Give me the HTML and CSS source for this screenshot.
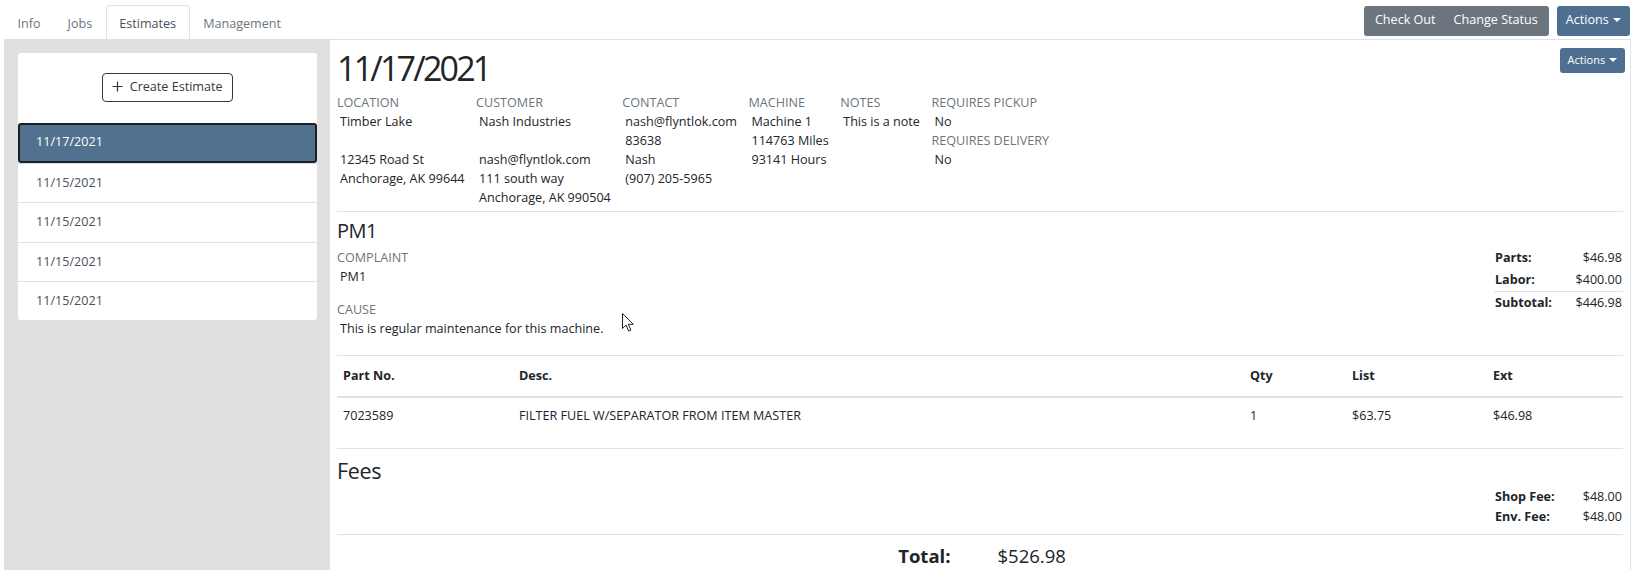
FILE: index.html
```html
<!DOCTYPE html>
<html lang="en">
<head>
    <meta charset="UTF-8">
    <meta name="viewport" content="width=device-width, initial-scale=1.0">
    <title>Estimates</title>
    <link rel="stylesheet" href="styles.css">
</head>
<body>

<!-- Top bar: tabs + page actions -->
<div class="topbar">
    <ul class="tabs">
        <li class="tab">Info</li>
        <li class="tab">Jobs</li>
        <li class="tab active">Estimates</li>
        <li class="tab">Management</li>
    </ul>
    <div class="top-actions">
        <div class="btn-group">
            <button class="btn btn-gray">Check Out</button>
            <button class="btn btn-gray">Change Status</button>
        </div>
        <button class="btn btn-blue">Actions <span class="caret"></span></button>
    </div>
</div>

<div class="workspace">

    <!-- Estimate list -->
    <aside class="sidebar">
        <div class="estimate-card">
            <div class="create-wrap">
                <button class="btn-outline">
                    <svg width="11" height="11" viewBox="0 0 11 11"><path d="M5.5 0.5v10M0.5 5.5h10" stroke="#333" stroke-width="1.2" fill="none"/></svg>
                    Create Estimate
                </button>
            </div>
            <ul class="estimate-list">
                <li class="estimate selected">11/17/2021</li>
                <li class="estimate">11/15/2021</li>
                <li class="estimate">11/15/2021</li>
                <li class="estimate">11/15/2021</li>
                <li class="estimate">11/15/2021</li>
            </ul>
        </div>
    </aside>

    <!-- Estimate detail -->
    <main class="detail">
        <button class="btn btn-blue btn-sm float-right">Actions <span class="caret"></span></button>
        <h1 class="estimate-date">11/17/2021</h1>

        <div class="info-row">
            <div class="info-col">
                <div class="label">Location</div>
                <div class="value">Timber Lake</div>
                <div class="value">&nbsp;</div>
                <div class="value">12345 Road St</div>
                <div class="value">Anchorage, AK 99644</div>
            </div>
            <div class="info-col">
                <div class="label">Customer</div>
                <div class="value">Nash Industries</div>
                <div class="value">&nbsp;</div>
                <div class="value">nash@flyntlok.com</div>
                <div class="value">111 south way</div>
                <div class="value">Anchorage, AK 990504</div>
            </div>
            <div class="info-col">
                <div class="label">Contact</div>
                <div class="value">nash@flyntlok.com</div>
                <div class="value">83638</div>
                <div class="value">Nash</div>
                <div class="value">(907) 205-5965</div>
            </div>
            <div class="info-col">
                <div class="label">Machine</div>
                <div class="value">Machine 1</div>
                <div class="value">114763 Miles</div>
                <div class="value">93141 Hours</div>
            </div>
            <div class="info-col">
                <div class="label">Notes</div>
                <div class="value">This is a note</div>
            </div>
            <div class="info-col">
                <div class="label">Requires Pickup</div>
                <div class="value">No</div>
                <div class="label">Requires Delivery</div>
                <div class="value">No</div>
            </div>
        </div>

        <hr class="divider">

        <h4 class="job-title">PM1</h4>
        <div class="job-row">
            <div class="job-text">
                <div class="label">Complaint</div>
                <div class="value">PM1</div>
                <div class="label cause">Cause</div>
                <div class="value">This is regular maintenance for this machine.</div>
            </div>
            <div class="sums job-sums">
                <div class="sum-row"><span>Parts:</span><span>$46.98</span></div>
                <div class="sum-row line"><span>Labor:</span><span>$400.00</span></div>
                <div class="sum-row"><span>Subtotal:</span><span>$446.98</span></div>
            </div>
        </div>

        <table class="parts">
            <thead>
                <tr>
                    <th class="c-part">Part No.</th>
                    <th class="c-desc">Desc.</th>
                    <th class="c-qty">Qty</th>
                    <th class="c-list">List</th>
                    <th>Ext</th>
                </tr>
            </thead>
            <tbody>
                <tr>
                    <td>7023589</td>
                    <td>FILTER FUEL W/SEPARATOR FROM ITEM MASTER</td>
                    <td>1</td>
                    <td>$63.75</td>
                    <td>$46.98</td>
                </tr>
            </tbody>
        </table>

        <h3 class="fees-title">Fees</h3>
        <div class="fees">
            <div class="sums">
                <div class="sum-row"><span>Shop Fee:</span><span>$48.00</span></div>
                <div class="sum-row"><span>Env. Fee:</span><span>$48.00</span></div>
            </div>
        </div>

        <div class="grand-total">
            <span class="total-label">Total:</span>
            <span class="total-value">$526.98</span>
        </div>
    </main>
</div>

<!-- mouse pointer captured in the screenshot -->
<svg class="cursor" width="13" height="19" viewBox="0 0 13 19">
    <path d="M0.5 0.5v15l3.6-3.4 2.6 6 2.2-1-2.6-5.8h5z" fill="#fff" stroke="#222" stroke-width="1"/>
</svg>

</body>
</html>
```

FILE: styles.css
```css
body {
    margin: 0;
    font-family: "Open Sans", "Noto Sans", Arial, sans-serif;
    font-size: 12.6px;
    line-height: 18.9px;
    color: #212529;
    background-color: white;
    position: relative;
}
ul {
    list-style: none;
    margin: 0;
    padding: 0;
}
button {
    font-family: inherit;
}

/* top bar */
.topbar {
    display: flex;
    justify-content: space-between;
    align-items: flex-end;
    height: 39px;
    padding: 0 10px 0 4px;
}
.tabs {
    display: flex;
}
.tab {
    padding: 9px 12.5px 5px;
    color: #6c757d;
    border: 1px solid transparent;
    border-bottom: none;
    border-radius: 4px 4px 0 0;
}
.tab.active {
    color: #495057;
    background-color: white;
    border-color: #dee2e6;
}
.top-actions {
    display: flex;
    gap: 8px;
    align-self: flex-start;
    margin-top: 6px;
}
.btn-group {
    display: flex;
    background-color: #6c757d;
    border-radius: 3px;
    padding: 0 2px;
}
.btn {
    border: none;
    color: white;
    font-size: 12.6px;
    line-height: 18.9px;
    padding: 5px 9px 6px;
    border-radius: 3px;
    cursor: pointer;
}
.btn-gray {
    background-color: #6c757d;
}
.btn-blue {
    background-color: #4f6f91;
    padding: 5px 9px 6px;
}
.btn-sm {
    font-size: 11px;
    line-height: 16px;
    padding: 4px 8px 5px;
    border-radius: 3px;
    margin: 1px -2px 0 0;
}
.caret {
    display: inline-block;
    width: 0;
    height: 0;
    border-left: 4px solid transparent;
    border-right: 4px solid transparent;
    border-top: 4px solid white;
    vertical-align: 2px;
    margin-left: 1px;
}
.float-right {
    float: right;
}

/* gray work area */
.workspace {
    display: flex;
    margin: 0 9px 0 4px;
    background-color: #e0e0e0;
    min-height: 531px;
}
.sidebar {
    width: 299px;
    padding: 14px 13px 0 14px;
    flex-shrink: 0;
}
.estimate-card {
    background-color: white;
    border-radius: 3px;
}
.create-wrap {
    text-align: center;
    padding: 20px 0 21px;
}
.btn-outline {
    background: white;
    border: 1px solid #343a40;
    border-radius: 4px;
    font-size: 12.6px;
    line-height: 18.9px;
    color: #343a40;
    padding: 4px 9px 4px;
    cursor: pointer;
}
.btn-outline svg {
    vertical-align: -1px;
    margin-right: 3px;
}
.estimate {
    padding: 10px 18px 9.5px;
    color: #495057;
    border-top: 1px solid #dee2e6;
}
.estimate:first-child {
    border-top: none;
}
.estimate.selected {
    background-color: #52718f;
    color: white;
    border: 2px solid #1d2124;
    border-radius: 3px;
    padding: 8px 16px 9px;
}

/* detail panel */
.detail {
    flex: 1;
    background-color: white;
    border-top: 1px solid #dee2e6;
    border-right: 1px solid #dee2e6;
    padding: 7px 7px 0 7px;
}
.estimate-date {
    margin: 0 0 4px;
    font-size: 34px;
    font-weight: 500;
    line-height: 43px;
    letter-spacing: -2.8px;
}
.info-row {
    display: flex;
    gap: 11.5px;
}
.label {
    text-transform: uppercase;
    color: #6c757d;
}
.value {
    padding-left: 3px;
}
.divider {
    border: none;
    border-top: 1px solid #dee2e6;
    margin: 4px 0 0;
}
.job-title {
    margin: 6px 0 6px;
    font-size: 20px;
    font-weight: 500;
    line-height: 25px;
    letter-spacing: -0.5px;
}
.job-row {
    display: flex;
    justify-content: space-between;
}
.cause {
    margin-top: 14px;
}
.sums {
    width: 129px;
}
.job-sums {
    margin-top: -2px;
}
.sum-row {
    display: flex;
    justify-content: space-between;
    padding: 1px;
    line-height: 20px;
}
.sum-row span:first-child {
    font-weight: bold;
}
.sum-row.line {
    border-bottom: 1px solid #dee2e6;
}

/* parts table */
.parts {
    width: 100%;
    border-collapse: collapse;
    margin-top: 16px;
}
.parts th {
    text-align: left;
    padding: 11px 6px 10px;
    border-top: 1px solid #dee2e6;
    border-bottom: 2px solid #dee2e6;
}
.parts td {
    padding: 9px 6px 22px;
    border-bottom: 1px solid #dee2e6;
}
.c-part {
    width: 164px;
}
.c-desc {
    width: 719px;
}
.c-qty {
    width: 90px;
}
.c-list {
    width: 129px;
}
.fees-title {
    margin: 8px 0 2px;
    font-size: 21.5px;
    font-weight: 400;
    line-height: 28px;
    letter-spacing: -0.3px;
}
.fees {
    display: flex;
    justify-content: flex-end;
    padding-bottom: 7px;
    border-bottom: 1px solid #dee2e6;
}
.fees .sum-row {
    padding: 0 1px;
    line-height: 20px;
}
.grand-total {
    display: flex;
    justify-content: center;
    gap: 47px;
    font-size: 18.5px;
    padding-top: 12px;
    padding-left: 4px;
}
.total-label {
    font-weight: bold;
}

.cursor {
    position: absolute;
    left: 622px;
    top: 313px;
}
```
